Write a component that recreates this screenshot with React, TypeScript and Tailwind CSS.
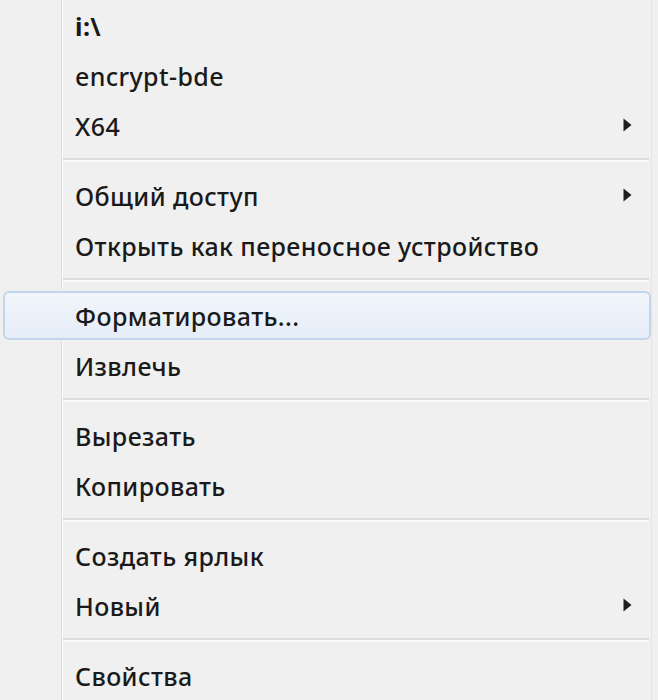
import React from "react";

type Item = { label: string; sub?: boolean; bold?: boolean; hl?: boolean } | "sep";

const items: Item[] = [
  { label: "i:\\", bold: true },
  { label: "encrypt-bde" },
  { label: "X64", sub: true },
  "sep",
  { label: "Общий доступ", sub: true },
  { label: "Открыть как переносное устройство" },
  "sep",
  { label: "Форматировать...", hl: true },
  { label: "Извлечь" },
  "sep",
  { label: "Вырезать" },
  { label: "Копировать" },
  "sep",
  { label: "Создать ярлык" },
  { label: "Новый", sub: true },
  "sep",
  { label: "Свойства" },
];

function Arrow() {
  return (
    <svg width="11" height="16" viewBox="0 0 11 16" className="mr-[18px]">
      <path d="M1.5 1.5 L9.5 8 L1.5 14.5 Z" fill="#1e1e1e" />
    </svg>
  );
}

function Gutter() {
  return (
    <div className="w-[63px] shrink-0 self-stretch flex">
      <div className="w-[61px] shrink-0" />
      <div className="w-[1px] bg-[#dcdcdc]" />
      <div className="w-[1px] bg-[#fafafa]" />
    </div>
  );
}

const textCls = "text-[25px] leading-none tracking-[0.4px] pt-[2px]";

export default function App() {
  return (
    <div
      className="w-[658px] h-[700px] overflow-hidden bg-[#f0f0f0] flex flex-col text-[#1a1a1a]"
      style={{ fontFamily: '"Noto Sans", "Open Sans", sans-serif' }}
    >
      <div className="w-[652px] flex flex-col border-r border-[#e4e4e4]">
        {items.map((it, i) =>
          it === "sep" ? (
            <div key={i} className="h-[20px] flex">
              <Gutter />
              <div className="flex-1 flex flex-col justify-center pr-[2px]">
                <div className="h-[2px] bg-[#dcdcdc]" />
                <div className="h-[2px] bg-[#fafafa]" />
              </div>
            </div>
          ) : it.hl ? (
            <div key={i} className="h-[50px] flex items-center">
              <div className="ml-[3px] w-[650px] h-[49px] flex items-center rounded-[6px] border-2 border-[#c3d5ec] bg-gradient-to-b from-[#f2f6fb] to-[#e5edf8]">
                <span className={"ml-[70px] font-medium " + textCls}>{it.label}</span>
              </div>
            </div>
          ) : (
            <div key={i} className="h-[50px] flex items-stretch">
              <Gutter />
              <div className="flex-1 flex items-center justify-between pl-[12px]">
                <span className={textCls + (it.bold ? " font-bold" : " font-medium")}>{it.label}</span>
                {it.sub && <Arrow />}
              </div>
            </div>
          )
        )}
      </div>
    </div>
  );
}
